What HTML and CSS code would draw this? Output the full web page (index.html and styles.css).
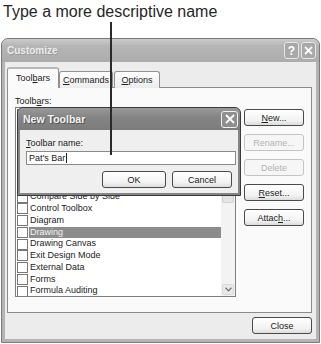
FILE: index.html
```html
<!DOCTYPE html>
<html lang="en">
<head>
    <meta charset="UTF-8">
    <meta name="viewport" content="width=device-width, initial-scale=1.0">
    <title>Customize</title>
    <link rel="stylesheet" href="styles.css">
</head>
<body>

<p class="caption">Type a more descriptive name</p>
<div class="pointer"></div>

<div class="window">
    <div class="titlebar">
        <span class="title">Customize</span>
        <span class="cap-buttons">
            <span class="cap-btn">?</span>
            <span class="cap-btn">
                <svg width="9" height="9" viewBox="0 0 9 9"><path d="M1 1L8 8M8 1L1 8" stroke="#fff" stroke-width="1.8"/></svg>
            </span>
        </span>
    </div>
    <div class="window-body">
        <div class="tabs">
            <div class="tab active">Tool<u>b</u>ars</div>
            <div class="tab"><u>C</u>ommands</div>
            <div class="tab"><u>O</u>ptions</div>
        </div>
        <div class="panel">
            <div class="list-col">
                <div class="label">Toolb<u>a</u>rs:</div>
                <div class="listbox">
                    <ul class="items">
                        <li><span class="check"></span><span class="name">Worksheet Menu Bar</span></li>
                        <li><span class="check"></span><span class="name">Chart Menu Bar</span></li>
                        <li><span class="check"></span><span class="name">Standard</span></li>
                        <li><span class="check"></span><span class="name">Formatting</span></li>
                        <li><span class="check"></span><span class="name">Borders</span></li>
                        <li><span class="check"></span><span class="name">Chart</span></li>
                        <li><span class="check"></span><span class="name">Circular Reference</span></li>
                        <li><span class="check"></span><span class="name">Compare Side by Side</span></li>
                        <li><span class="check"></span><span class="name">Control Toolbox</span></li>
                        <li><span class="check"></span><span class="name">Diagram</span></li>
                        <li class="selected"><span class="check"></span><span class="name">Drawing</span></li>
                        <li><span class="check"></span><span class="name">Drawing Canvas</span></li>
                        <li><span class="check"></span><span class="name">Exit Design Mode</span></li>
                        <li><span class="check"></span><span class="name">External Data</span></li>
                        <li><span class="check"></span><span class="name">Forms</span></li>
                        <li><span class="check"></span><span class="name">Formula Auditing</span></li>
                    </ul>
                    <div class="scrollbar">
                        <div class="scroll-btn"></div>
                        <div class="thumb"></div>
                        <div class="scroll-btn down">
                            <svg width="7" height="5" viewBox="0 0 7 5"><path d="M0.5 0.8L3.5 3.8L6.5 0.8" fill="none" stroke="#777" stroke-width="1.3"/></svg>
                        </div>
                    </div>
                </div>
            </div>
            <div class="side-buttons">
                <button><u>N</u>ew...</button>
                <button disabled>Rename...</button>
                <button disabled>Delete</button>
                <button><u>R</u>eset...</button>
                <button>Attac<u>h</u>...</button>
            </div>
        </div>
        <div class="footer">
            <button>Close</button>
        </div>
    </div>
</div>

<div class="dialog">
    <div class="dialog-titlebar">
        <span class="title">New Toolbar</span>
        <span class="dialog-close">
            <svg width="10" height="10" viewBox="0 0 10 10"><path d="M1 1L9 9M9 1L1 9" stroke="#fff" stroke-width="1.8"/></svg>
        </span>
    </div>
    <div class="dialog-body">
        <div class="label"><u>T</u>oolbar name:</div>
        <div class="textbox">Pat's Bar<span class="caret"></span></div>
        <div class="dialog-buttons">
            <button class="ok">OK</button>
            <button>Cancel</button>
        </div>
    </div>
</div>

</body>
</html>
```

FILE: styles.css
```css
body {
    margin: 0;
    background-color: white;
    font-family: "Liberation Sans", Arial, sans-serif;
    position: relative;
    width: 321px;
    height: 344px;
    overflow: hidden;
}
u {
    text-decoration-thickness: 1px;
    text-underline-offset: 1px;
}
.caption {
    margin: 0;
    height: 38px;
    box-sizing: border-box;
    padding: 3px 0 0 3px;
    font-size: 16px;
    line-height: 18px;
    color: #262626;
}
.pointer {
    position: absolute;
    left: 110px;
    top: 22px;
    width: 2px;
    height: 133px;
    background-color: #2a2a2a;
    z-index: 5;
}
.window {
    margin-left: 1px;
    width: 319px;
    height: 305px;
    box-sizing: border-box;
    border: 1px solid #7a7a7a;
    border-radius: 7px 7px 0 0;
    background-color: #b4b4b4;
    display: flex;
    flex-direction: column;
}
.titlebar {
    height: 23px;
    display: flex;
    align-items: center;
    justify-content: space-between;
    padding: 0 3px 0 5px;
    border-radius: 6px 6px 0 0;
    background: linear-gradient(#cbcbcb, #b5b5b5 30%, #acacac);
}
.title {
    font-size: 10px;
    font-weight: bold;
    color: #ececec;
    text-shadow: 1px 1px 0 #999;
}
.cap-buttons {
    display: flex;
    gap: 2px;
}
.cap-btn {
    width: 15px;
    height: 17px;
    box-sizing: border-box;
    border: 1px solid #e6e6e6;
    border-radius: 3px;
    background-color: #a8a8a8;
    color: white;
    font-size: 12px;
    font-weight: bold;
    display: flex;
    align-items: center;
    justify-content: center;
}
.window-body {
    flex: 1;
    margin: 0 3px 3px;
    background-color: #ececec;
    padding: 5px 4px 0 2px;
    display: flex;
    flex-direction: column;
}
.tabs {
    display: flex;
    align-items: flex-end;
    height: 21px;
    margin-bottom: -1px;
    position: relative;
    z-index: 1;
}
.tab {
    height: 17px;
    box-sizing: border-box;
    border: 1px solid #919191;
    border-bottom: none;
    border-radius: 3px 3px 0 0;
    background: linear-gradient(#ffffff, #ececec);
    font-size: 9px;
    line-height: 16px;
    text-align: center;
    color: #222;
}
.tab:nth-child(2) {
    width: 54px;
}
.tab:nth-child(3) {
    width: 46px;
    margin-left: 1px;
}
.tab.active {
    width: 52px;
    height: 21px;
    line-height: 19px;
    background: #fbfbfb;
    border-top: 2px solid #b8b8b8;
}
.panel {
    width: 305px;
    height: 226px;
    box-sizing: border-box;
    border: 1px solid #8c8c8c;
    background-color: #fafafa;
    padding: 8px 0 0 7px;
    display: flex;
}
.label {
    font-size: 9px;
    line-height: 11px;
    height: 11px;
    color: #222;
}
.listbox {
    width: 221px;
    height: 190px;
    box-sizing: border-box;
    border: 1px solid #7f7f7f;
    background-color: white;
    display: flex;
    overflow: hidden;
}
.items {
    list-style: none;
    margin: 0;
    padding: 1px 0 0 1px;
    flex: 1;
}
.items li {
    height: 11.75px;
    display: flex;
    align-items: center;
    font-size: 9px;
    color: #222;
}
.check {
    width: 11px;
    height: 11px;
    box-sizing: border-box;
    border: 1px solid #777;
    background-color: white;
    margin-right: 1px;
    flex-shrink: 0;
}
.name {
    flex: 1;
    padding-left: 1px;
    line-height: 11.75px;
    white-space: nowrap;
}
.items li.selected .name {
    background-color: #8c8c8c;
    color: #f4f4f4;
}
.scrollbar {
    width: 14px;
    background-color: #f3f3f3;
    display: flex;
    flex-direction: column;
    padding: 1px;
    box-sizing: border-box;
}
.scroll-btn {
    height: 11px;
    border: 1px solid #d8d8d8;
    border-radius: 2px;
    background-color: #e9e9e9;
    box-sizing: border-box;
}
.scroll-btn.down {
    margin-top: auto;
    display: flex;
    align-items: center;
    justify-content: center;
}
.thumb {
    height: 82px;
    margin-top: 1px;
    border: 1px solid #d0d0d0;
    border-radius: 2px;
    background-color: #e4e4e4;
    box-sizing: border-box;
}
.side-buttons {
    margin: 13px 0 0 8px;
    display: flex;
    flex-direction: column;
    gap: 8px;
}
button {
    width: 60px;
    height: 17px;
    padding: 0;
    box-sizing: border-box;
    border: 1px solid #4a4a4a;
    border-radius: 3px;
    background: linear-gradient(#ffffff, #f2f2f2 70%, #dcdcdc);
    font-family: "Liberation Sans", Arial, sans-serif;
    font-size: 9px;
    color: #222;
}
button:disabled {
    border-color: #c4c4c4;
    color: #b4b4b4;
    background: #f6f6f6;
}
.footer {
    display: flex;
    justify-content: flex-end;
    padding-top: 4px;
}
.dialog {
    position: absolute;
    left: 17px;
    top: 107px;
    width: 224px;
    height: 89px;
    box-sizing: border-box;
    border: 1px solid #3a3a3a;
    border-radius: 6px 6px 0 0;
    background-color: #858585;
    display: flex;
    flex-direction: column;
    z-index: 3;
}
.dialog-titlebar {
    height: 22px;
    display: flex;
    align-items: center;
    justify-content: space-between;
    padding: 0 2px 0 5px;
    border-radius: 5px 5px 0 0;
    background: linear-gradient(#9a9a9a, #858585 40%, #7c7c7c);
}
.dialog-titlebar .title {
    font-size: 10.5px;
    color: #f2f2f2;
    text-shadow: 1px 1px 0 #555;
}
.dialog-close {
    width: 17px;
    height: 17px;
    box-sizing: border-box;
    border: 1px solid #f0f0f0;
    border-radius: 3px;
    background-color: #8e8e8e;
    display: flex;
    align-items: center;
    justify-content: center;
}
.dialog-body {
    flex: 1;
    margin: 0 2px 2px;
    background-color: #efefef;
    padding: 8px 4px 0 6px;
}
.textbox {
    width: 210px;
    height: 14px;
    margin-top: 2px;
    box-sizing: border-box;
    border: 1px solid #8a8a8a;
    background-color: white;
    font-size: 9px;
    line-height: 12px;
    padding-left: 2px;
    color: #222;
    display: flex;
    align-items: center;
}
.caret {
    width: 1px;
    height: 10px;
    background-color: #222;
    margin-left: 1px;
}
.dialog-buttons {
    display: flex;
    justify-content: flex-end;
    gap: 6px;
    padding: 6px 2px 0 0;
}
.dialog-buttons .ok {
    width: 64px;
}
```
